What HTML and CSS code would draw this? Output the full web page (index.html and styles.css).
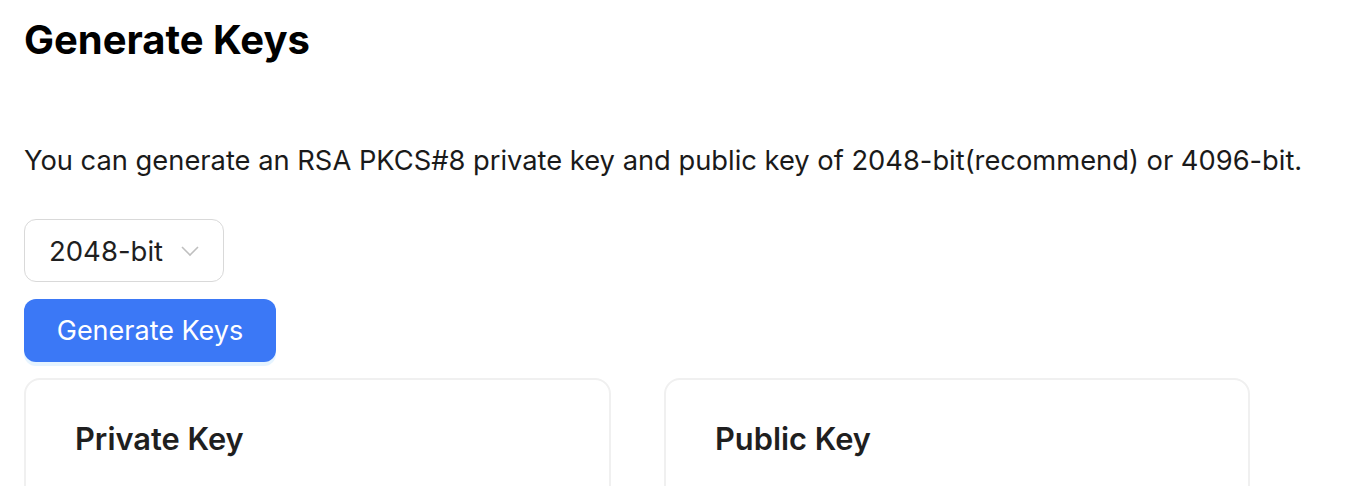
FILE: index.html
```html
<html>
  <head>
    <title>Generate Keys</title>
    <link rel="stylesheet" href="styles.css">
  </head>
  <body>
    <div class="page">
      <h1 class="headline">Generate Keys</h1>
      <p class="intro">You can generate an RSA PKCS#8 private key and public key of 2048-bit(recommend) or 4096-bit.</p>

      <div class="select">
        <span class="select-value">2048-bit</span>
        <svg class="select-arrow" width="18" height="12" viewBox="0 0 18 12">
          <path d="M1 2 L9 10 L17 2" fill="none" stroke="#bfbfbf" stroke-width="1.6"/>
        </svg>
      </div>

      <button class="btn-primary">Generate Keys</button>

      <div class="cards">
        <div class="card">
          <div class="card-title">Private Key</div>
        </div>
        <div class="card">
          <div class="card-title">Public Key</div>
        </div>
      </div>
    </div>
  </body>
</html>
```

FILE: styles.css
```css
body {
  margin: 0px;
  padding: 0px;
  background: #ffffff;
  font-family: Inter, "Noto Sans", sans-serif;
}

.page {
  padding: 13px 24px 0px 24px;
}

.headline {
  margin: 0px;
  font-size: 40px;
  font-weight: 700;
  color: #000000;
  line-height: 54px;
}

.intro {
  margin: 76px 0px 0px 0px;
  font-size: 27.3px;
  color: #1a1a1a;
  line-height: 36px;
}

.select {
  margin-top: 40px;
  border: 1px solid #d9d9d9;
  border-radius: 12px;
  display: flex;
  align-items: center;
  padding: 0px 24px;
  box-sizing: border-box;
  width: 200px;
  height: 63px;
}

.select-value {
  font-size: 27.5px;
  color: #1f1f1f;
  flex: 1;
}

.select-arrow {
  display: block;
}

.btn-primary {
  margin-top: 17px;
  display: block;
  width: 252px;
  height: 63px;
  border: none;
  border-radius: 12px;
  background: #3b78f6;
  color: #ffffff;
  font-family: Inter, "Noto Sans", sans-serif;
  font-size: 27px;
  box-shadow: 0px 4px 0px rgba(5, 145, 255, 0.1);
}

.cards {
  margin-top: 16px;
  display: grid;
  grid-template-columns: 587px 586px;
  column-gap: 53px;
}

.card {
  border: 2px solid #f0f0f0;
  border-radius: 16px;
  height: 200px;
  padding: 40px 49px;
  box-sizing: border-box;
}

.card-title {
  font-size: 30.8px;
  font-weight: 600;
  color: #1f1f1f;
}
```
